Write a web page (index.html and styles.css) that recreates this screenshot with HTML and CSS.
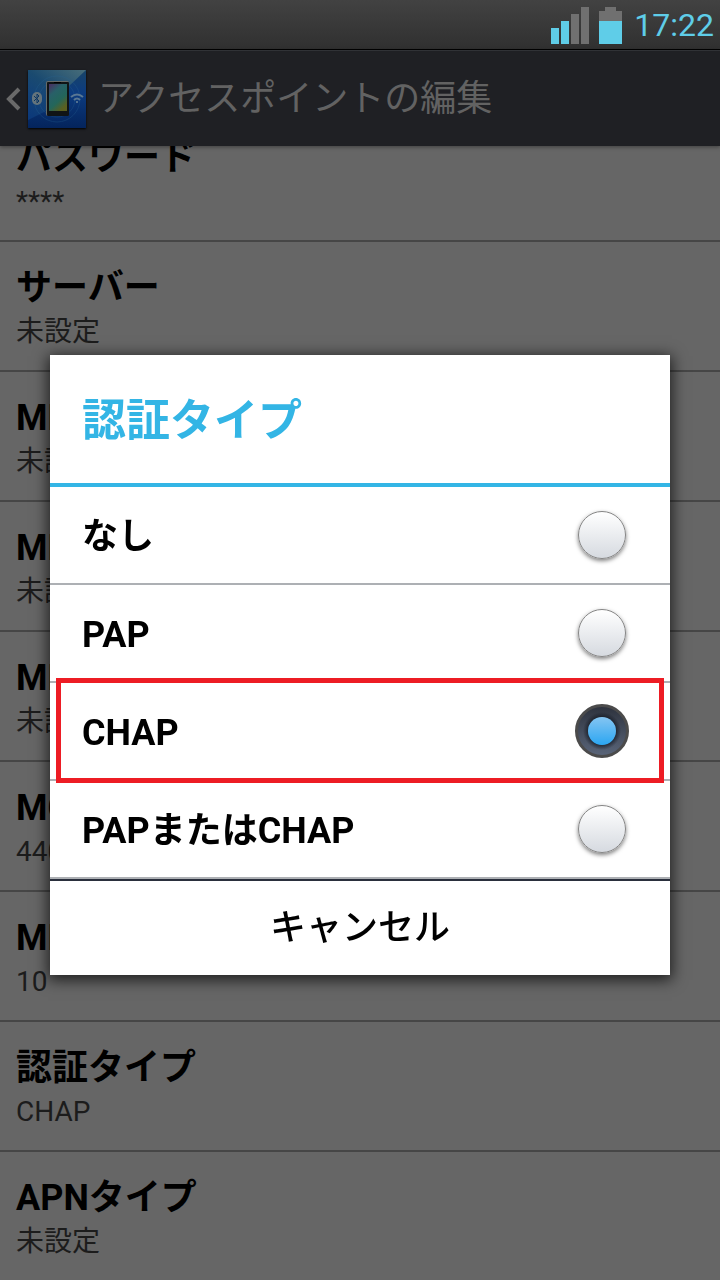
FILE: index.html
```
<!doctype html>
<html lang="ja">

<head>
<meta charset="utf-8">
<meta name="viewport" content="width=device-width, initial-scale=1.0">
<title>アクセスポイントの編集</title>
<link rel="stylesheet" href="styles.css">
</head>

<body>
<div class="screen">
	<div class="statusbar">
		<svg class="signal" width="38" height="37" viewBox="0 0 38 37">
			<path fill="#5fcde8" d="M0 21h8v16H0zM10 14h8v23h-8z"/>
			<path fill="#707070" d="M20 7h8v30h-8zM30 0h8v37h-8z"/>
		</svg>
		<svg class="battery" width="23" height="37" viewBox="0 0 23 37">
			<path fill="#707070" d="M6 0h11v4h6v10H0V4h6z"/>
			<path fill="#5fcde8" d="M0 14h23v23H0z"/>
		</svg>
		<span class="clock">17:22</span>
	</div>

	<header class="appbar">
		<a class="back" href="#" aria-label="戻る">
			<svg width="15" height="24" viewBox="0 0 15 24">
				<path d="M13 2L3 12l10 10" fill="none" stroke="#6a6a6a" stroke-width="4"/>
			</svg>
		</a>
		<svg class="appicon" width="58" height="58" viewBox="0 0 58 58">
			<defs>
				<linearGradient id="bg" x1="0" y1="0" x2="0" y2="1">
					<stop offset="0" stop-color="#184468"/>
					<stop offset=".4" stop-color="#0c3b80"/>
					<stop offset="1" stop-color="#04245c"/>
				</linearGradient>
				<linearGradient id="shine" x1="0" y1="1" x2="1" y2="0">
					<stop offset="0" stop-color="#0c3b80"/>
					<stop offset=".5" stop-color="#1b4c70"/>
					<stop offset="1" stop-color="#54787e"/>
				</linearGradient>
				<linearGradient id="lcd" x1="0" y1="0" x2=".6" y2="1">
					<stop offset="0" stop-color="#4b2c62"/>
					<stop offset=".35" stop-color="#286068"/>
					<stop offset=".7" stop-color="#23665a"/>
					<stop offset="1" stop-color="#5a6020"/>
				</linearGradient>
			</defs>
			<path fill="url(#bg)" d="M0 0h58v58H0z"/>
			<path fill="url(#shine)" d="M0 0h58L40 17 20 40 0 50z" opacity=".8"/>
			<g fill="none" stroke="#286492" opacity=".3">
				<circle cx="29" cy="29" r="23"/>
				<circle cx="29" cy="29" r="18"/>
			</g>
			<rect x="18" y="11" width="23" height="35" rx="2" fill="#666a68"/>
			<rect x="19" y="12" width="22" height="34" rx="1" fill="#101416"/>
			<path fill="url(#lcd)" d="M21 14h18v27H21z"/>
			<path fill="#000" d="M26 12h7v1h-7z"/>
			<rect x="4" y="22" width="10" height="13" rx="5" fill="#64747c"/>
			<path d="M6 26l5 5-2 2v-9l2 2-5 5" fill="none" stroke="#0b3562"/>
			<g fill="none" stroke="#5a7894" stroke-width="2">
				<path d="M43 27q6-5 12 0M46 30q3-3 6 0"/>
			</g>
			<circle cx="49" cy="32" r="1" fill="#6a8498"/>
		</svg>
		<h1>アクセスポイントの編集</h1>
	</header>

	<main class="settings">
		<ul>
			<li><b>パスワード</b><span>****</span></li>
			<li><b>サーバー</b><span>未設定</span></li>
			<li><b>MMSC</b><span>未設定</span></li>
			<li><b>MMSプロキシ</b><span>未設定</span></li>
			<li><b>MMSポート</b><span>未設定</span></li>
			<li><b>MCC</b><span>440</span></li>
			<li><b>MNC</b><span>10</span></li>
			<li><b>認証タイプ</b><span>CHAP</span></li>
			<li><b>APNタイプ</b><span>未設定</span></li>
		</ul>
	</main>
</div>

<div class="overlay">
	<form class="dialog" role="dialog" aria-labelledby="dialogtitle">
		<h2 id="dialogtitle">認証タイプ</h2>
		<label class="option"><span>なし</span><input type="radio" name="auth"></label>
		<label class="option"><span>PAP</span><input type="radio" name="auth"></label>
		<label class="option marked"><span>CHAP</span><input type="radio" name="auth" checked></label>
		<label class="option"><span>PAPまたはCHAP</span><input type="radio" name="auth"></label>
		<button type="button" class="cancel">キャンセル</button>
	</form>
</div>
</body>
</html>
```
FILE: styles.css
```
* {
	box-sizing: border-box;
}

body {
	margin: 0;
	background: #666;
	font-family: Roboto, "Noto Sans CJK JP", sans-serif;
}

.screen {
	display: flex;
	flex-direction: column;
	height: 100vh;
	overflow: hidden;
}

/* status bar */
.statusbar {
	display: flex;
	flex: none;
	align-items: center;
	justify-content: flex-end;
	gap: 10px;
	height: 50px;
	padding-right: 6px;
	border-bottom: 1px solid #000;
	background: linear-gradient(#424242, #303030);
}
.statusbar svg {
	margin-top: 2px;
}
.clock {
	margin-left: 2px;
	font-size: 32px;
	line-height: 48px;
	color: #5fcde8;
}

/* title bar */
.appbar {
	display: flex;
	flex: none;
	align-items: center;
	position: relative;
	height: 96px;
	padding-left: 6px;
	border-top: 1px solid #303236;
	background: #1f2024;
	box-shadow: 0 1px 4px rgba(0, 0, 0, .4);
}
.back {
	display: flex;
	margin-right: 7px;
}
.appicon {
	box-shadow: 0 1px 2px #000;
}
.appbar h1 {
	margin: 0 0 0 12px;
	font-size: 36px;
	line-height: 44px;
	font-weight: 400;
	color: #626262;
}

/* settings list, scrolled down a little */
.settings {
	flex: 1;
	min-height: 0;
	overflow: hidden;
}
.settings ul {
	margin: -34px 0 0;
	padding: 0;
	list-style: none;
}
.settings li {
	display: flex;
	flex-direction: column;
	height: 130px;
	padding: 24px 16px 0;
	border-bottom: 2px solid #464646;
	line-height: 44px;
}
.settings b {
	font-size: 36px;
	font-weight: 700;
	color: #000;
}
.settings span {
	font-size: 28px;
	color: #1c1c1c;
}

/* dialog */
.overlay {
	display: flex;
	align-items: center;
	position: fixed;
	inset: 50px 0 0;
	padding: 0 50px;
}
.dialog {
	flex: 1;
	background: #fff;
	box-shadow: 0 3px 14px 2px rgba(0, 0, 0, .7);
}
.dialog h2 {
	margin: 0;
	padding: 34px 32px 30px;
	border-bottom: 4px solid #33b5e5;
	font-size: 44px;
	line-height: 64px;
	font-weight: 700;
	color: #33b5e5;
}
.option {
	display: flex;
	align-items: center;
	justify-content: space-between;
	position: relative;
	height: 98px;
	padding: 0 41px 0 32px;
	border-bottom: 2px solid #adb0b4;
	font-size: 36px;
	line-height: 44px;
	font-weight: 700;
	color: #000;
}
.option span {
	padding-top: 4px;
}
.option input {
	appearance: none;
	width: 48px;
	height: 48px;
	margin: 0 3px;
	border: 1px solid #858585;
	border-radius: 50%;
	background: linear-gradient(#fff, #d6dae0);
	box-shadow: 0 2px 4px rgba(0, 0, 0, .5);
}
.option input:checked {
	width: 54px;
	height: 54px;
	margin: 0;
	border: 3px solid #4b4b4b;
	background:
		radial-gradient(circle at 50% 50%, transparent 13px, rgba(20, 25, 35, .7) 14px, transparent 19px),
		linear-gradient(#2e333e, #596478);
	box-shadow: none;
	display: grid;
	place-items: center;
}
.option input:checked::before {
	content: "";
	width: 28px;
	height: 28px;
	border-radius: 50%;
	background: linear-gradient(#85c5f2, #2ba6f2);
}
/* red frame round the choice to make */
.marked::after {
	content: "";
	position: absolute;
	inset: -5px 6px -4px;
	z-index: 1;
	border: 5px solid #ed1c24;
	pointer-events: none;
}
.cancel {
	display: block;
	width: 100%;
	height: 96px;
	padding: 0;
	border: 0;
	border-top: 2px solid #2a2f3c;
	background: #fff;
	font: 500 36px/44px Roboto, "Noto Sans CJK JP", sans-serif;
	color: #000;
}
```
